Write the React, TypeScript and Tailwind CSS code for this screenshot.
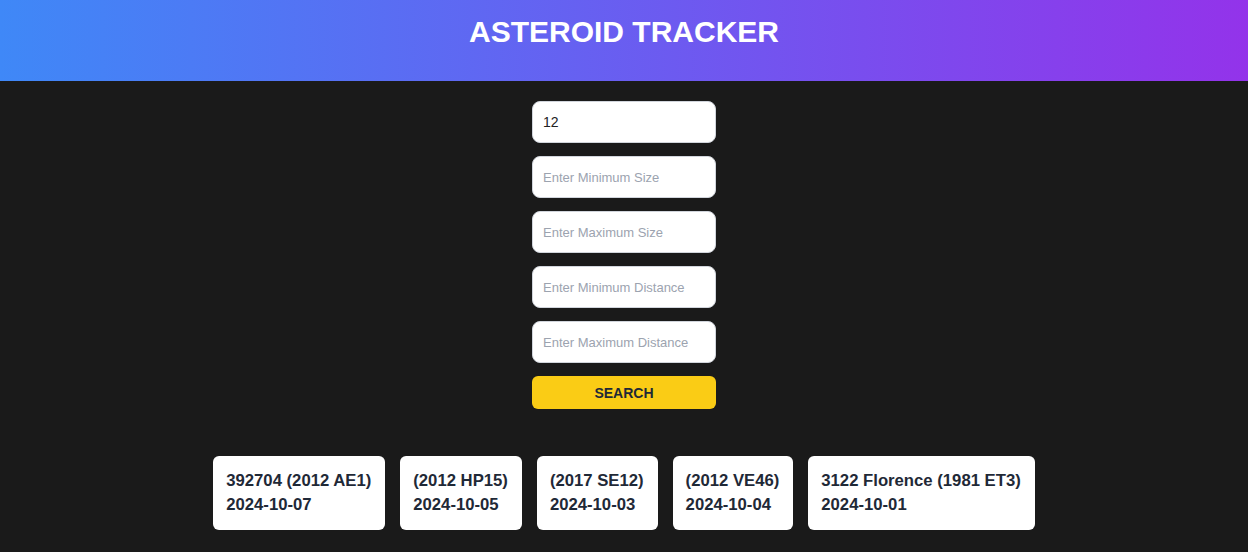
import React from 'react';

const asteroids = [
  { name: '392704 (2012 AE1)', date: '2024-10-07' },
  { name: '(2012 HP15)', date: '2024-10-05' },
  { name: '(2017 SE12)', date: '2024-10-03' },
  { name: '(2012 VE46)', date: '2024-10-04' },
  { name: '3122 Florence (1981 ET3)', date: '2024-10-01' },
];

const placeholders = [
  'Enter Minimum Size',
  'Enter Maximum Size',
  'Enter Minimum Distance',
  'Enter Maximum Distance',
];

const App: React.FC = () => {
  return (
    <div className="min-h-[552px] bg-[#1a1a1a] font-['Liberation_Sans',Arial,sans-serif]">
      <header className="h-[81px] bg-[linear-gradient(to_right,#3f88f7,#9333ea)] pt-[14px] text-center">
        <h1 className="text-3xl font-bold text-white">ASTEROID TRACKER</h1>
      </header>

      <div className="mx-auto mt-[20px] flex w-[184px] flex-col gap-[13px]">
        <input
          type="text"
          defaultValue="12"
          className="h-[42px] rounded-lg border border-gray-300 bg-white px-[10px] text-sm font-medium text-[#222] outline-none"
        />
        {placeholders.map((p) => (
          <input
            key={p}
            type="text"
            placeholder={p}
            className="h-[42px] rounded-lg border border-gray-300 bg-white px-[10px] text-[13px] text-[#222] outline-none placeholder:text-[#9ca3af]"
          />
        ))}
        <button className="h-[33px] rounded-md bg-[#facc15] text-sm font-bold text-[#1f2937]">
          SEARCH
        </button>
      </div>

      <div className="mt-[47px] flex justify-center gap-[15px]">
        {asteroids.map((a) => (
          <div key={a.name} className="h-[74px] rounded-md bg-white pl-[13px] pr-[14px] pt-[13px] text-[16.7px] font-bold leading-6 text-[#1f2937]">
            <p>{a.name}</p>
            <p>{a.date}</p>
          </div>
        ))}
      </div>
    </div>
  );
};

export default App;
